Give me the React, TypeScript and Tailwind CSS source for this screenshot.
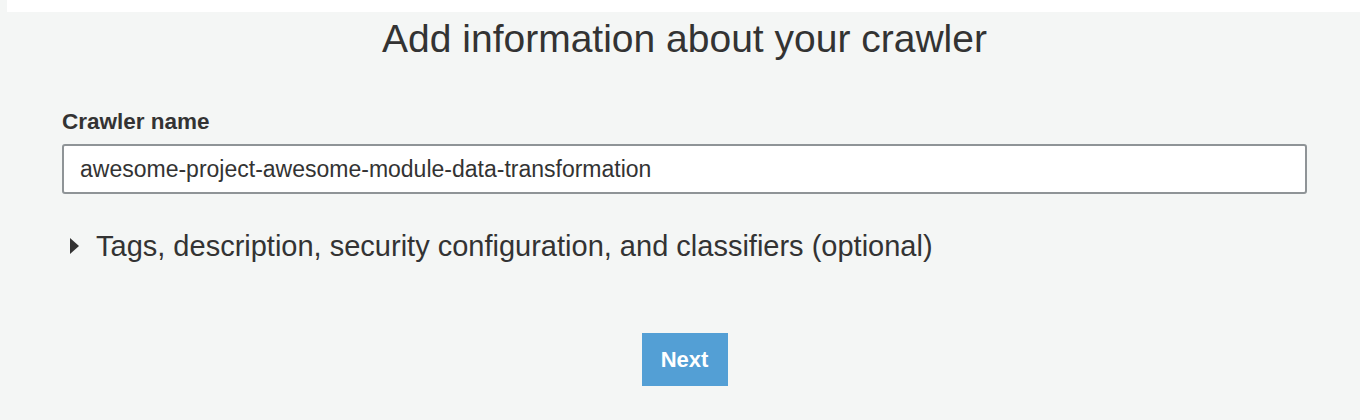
import { useState } from "react";

const App = () => {
  const [crawlerName, setCrawlerName] = useState(
    "awesome-project-awesome-module-data-transformation"
  );
  const [open, setOpen] = useState(false);

  return (
    <div
      className="min-h-[420px] w-full bg-[#f4f6f5] text-[#333333]"
      style={{ fontFamily: '"Liberation Sans", Arial, sans-serif' }}
    >
      <div className="ml-[7px] h-[12px] bg-white" />

      <div className="pl-[62px] pr-[53px]">
        <h1 className="mt-[3px] text-center text-[39px] leading-[47px] font-normal text-[#333333]">
          Add information about your crawler
        </h1>

        <div className="mt-[48px]">
          <label
            htmlFor="crawler-name"
            className="block text-[22.5px] leading-[24px] font-bold text-[#333333]"
          >
            Crawler name
          </label>
          <input
            id="crawler-name"
            value={crawlerName}
            onChange={({ target }) => setCrawlerName(target.value)}
            className="mt-[10px] block h-[50px] w-full rounded-[3px] border-2 border-[#8f9497] bg-white px-[16px] text-[23px] text-[#333333] outline-none"
          />
        </div>

        <button
          type="button"
          onClick={() => setOpen(!open)}
          className="mt-[35px] flex items-center gap-[17px] pl-[8px] text-[29px] leading-[34px] text-[#333333]"
        >
          <svg width="9" height="16" viewBox="0 0 9 16" className={open ? "rotate-90" : ""}>
            <path d="M0 0 L9 8 L0 16 Z" fill="#333333" />
          </svg>
          Tags, description, security configuration, and classifiers (optional)
        </button>

        <div className="mt-[70px] flex justify-center">
          <button
            type="button"
            className="h-[53px] w-[86px] bg-[#539fd5] text-[22px] font-bold text-white"
          >
            Next
          </button>
        </div>
      </div>
    </div>
  );
};

export default App;
